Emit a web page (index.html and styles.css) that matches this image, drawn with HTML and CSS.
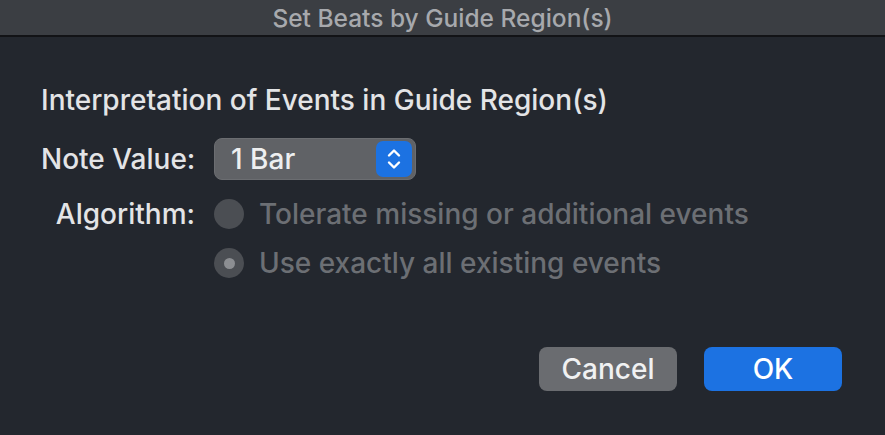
FILE: index.html
```html
<!DOCTYPE html>
<html>
<head>
<meta charset="utf-8">
<link rel="stylesheet" href="styles.css">
</head>
<body>
<div class="window">
  <div class="titlebar">Set Beats by Guide Region(s)</div>
  <div class="content">
    <div class="heading">Interpretation of Events in Guide Region(s)</div>
    <div class="form">
      <span class="label note-label">Note Value:</span>
      <div class="popup">
        <span class="popup-text">1 Bar</span>
        <span class="stepper">
          <svg width="20" height="28" viewBox="0 0 20 28"><path d="M5 10.5 L10 5.5 L15 10.5 M5 17.5 L10 22.5 L15 17.5" fill="none" stroke="#fff" stroke-width="2.4" stroke-linecap="round" stroke-linejoin="round"/></svg>
        </span>
      </div>
      <span class="label algo-label">Algorithm:</span>
      <div class="radios">
        <div class="radio-item"><span class="radio"></span><span class="radio-text">Tolerate missing or additional events</span></div>
        <div class="radio-item"><span class="radio checked"></span><span class="radio-text">Use exactly all existing events</span></div>
      </div>
    </div>
    <div class="buttons">
      <button class="btn cancel">Cancel</button>
      <button class="btn ok">OK</button>
    </div>
  </div>
</div>
</body>
</html>
```
FILE: styles.css
```css
html, body {
  margin: 0;
  padding: 0;
  background: #23272e;
}
body {
  width: 885px;
  height: 435px;
  overflow: hidden;
  font-family: "Inter", "Liberation Sans", sans-serif;
}
.window {
  width: 885px;
  height: 435px;
  background: #23272e;
  display: flex;
  flex-direction: column;
}
.titlebar {
  height: 35px;
  background: #3b3e43;
  border-bottom: 2px solid #121316;
  color: #a7a9ad;
  font-size: 24.5px;
  font-weight: 500;
  display: flex;
  align-items: center;
  justify-content: center;
}
.content {
  flex: 1;
  padding: 46px 43px 0 41px;
  color: #e3e4e6;
  font-weight: 500;
  display: flex;
  flex-direction: column;
}
.heading {
  font-size: 28px;
  line-height: 34px;
}
.form {
  margin-top: 21px;
  display: grid;
  grid-template-columns: 154px auto;
  column-gap: 19px;
  row-gap: 19px;
  justify-content: start;
}
.label {
  font-size: 28px;
  line-height: 30px;
  text-align: right;
  white-space: nowrap;
}
.note-label {
  align-self: center;
}
.algo-label {
  align-self: start;
}
.popup {
  width: 202px;
  height: 42px;
  box-sizing: border-box;
  background: #606266;
  border: 1px solid #6b6d71;
  border-radius: 8px;
  display: flex;
  align-items: center;
  justify-content: space-between;
  padding: 0 3px 0 16px;
}
.popup-text {
  font-size: 28px;
  color: #eeeff0;
}
.stepper {
  width: 36px;
  height: 36px;
  background: #1c72e2;
  border-radius: 7px;
  display: flex;
  align-items: center;
  justify-content: center;
}
.radios {
  display: flex;
  flex-direction: column;
  gap: 19px;
}
.radio-item {
  display: flex;
  align-items: center;
  height: 30px;
}
.radio {
  width: 30px;
  height: 30px;
  border-radius: 50%;
  background: #4b4e53;
  margin-right: 15px;
  display: flex;
  align-items: center;
  justify-content: center;
  flex: none;
}
.radio.checked::after {
  content: "";
  width: 11px;
  height: 11px;
  border-radius: 50%;
  background: #8c8e92;
}
.radio-text {
  font-size: 28px;
  color: #6c6f74;
  white-space: nowrap;
}
.buttons {
  margin-top: auto;
  margin-bottom: 44px;
  display: flex;
  justify-content: flex-end;
  gap: 27px;
}
.btn {
  width: 138px;
  height: 44px;
  border: none;
  border-radius: 8px;
  font-family: inherit;
  font-size: 28px;
  font-weight: 500;
  color: #f0f1f2;
  padding: 0;
}
.cancel {
  background: #6a6c70;
}
.ok {
  background: #1c72e2;
  color: #fff;
}
```
